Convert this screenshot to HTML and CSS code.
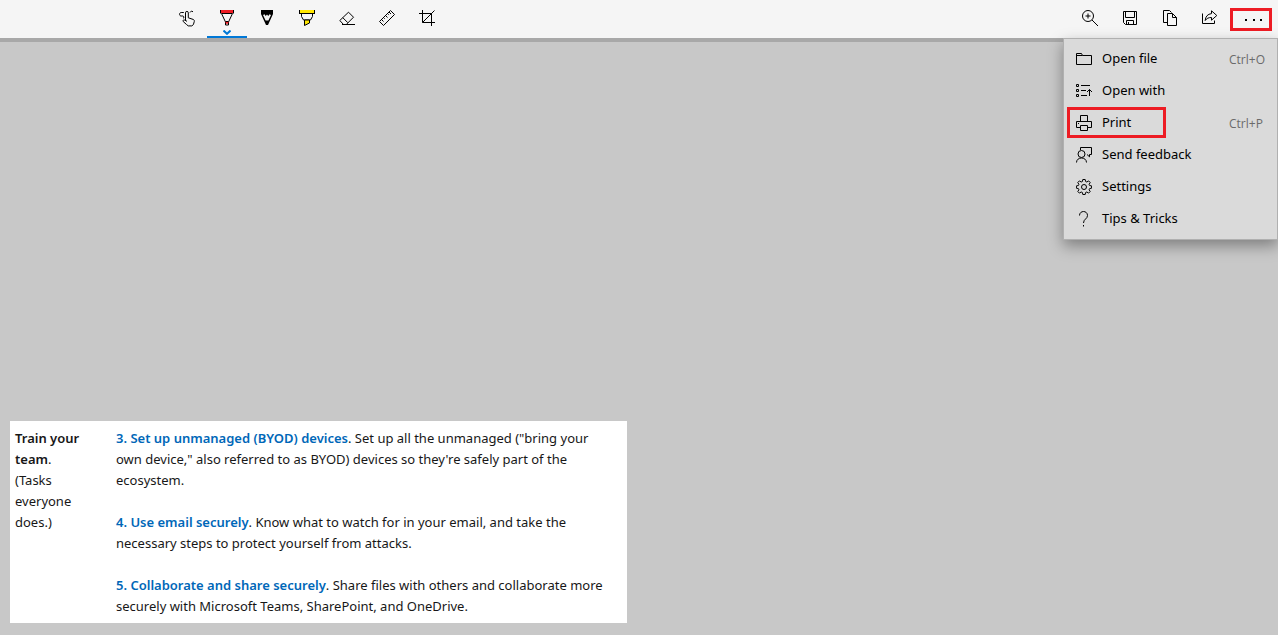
FILE: index.html
```html
<!DOCTYPE html>
<html lang="en">
<head>
<meta charset="utf-8">
<title>Snip &amp; Sketch</title>
<link rel="stylesheet" href="styles.css">
</head>
<body>
<header class="toolbar">
  <div class="tools">
    <button class="tool" aria-label="Touch writing"><svg class="icon" viewBox="0 0 20 20"><path d="M8.500 12.500V4.800a1.400 1.400 0 0 1 2.800 0v5l4.800 1.600c1 .4 1.400 1 1.200 2l-.9 3.200-1.600 1.300h-3.600L9.500 16.500l-3.300-3c-.8-1 .5-2 1.500-1.400l2.300 1.200M6.800 4.500H4.200C2 4.500 2 8 4.200 8h1.600c1.400.2 1.400 2 .2 2.500M13 4.500l1.500-1.500 1.500.8"/></svg></button>
    <button class="tool tool-active" aria-label="Ballpoint pen"><svg class="icon" viewBox="0 0 20 20"><path d="M4.500 5.500l4 8.500v3h3v-3l4-8.500z"/><path class="red" d="M3 2h14v3H3zM8.500 13h3v1.500l-1.500 2-1.500-2z"/><path d="M3.500 5.500v-3.500M16.500 5.500v-3.500M8.500 13.500h3"/></svg><svg class="chevron" viewBox="0 0 8 5"><path d="M0.500 0.500L4 3.800L7.500 0.500"/></svg></button>
    <button class="tool" aria-label="Pencil"><svg class="icon" viewBox="0 0 20 20"><path class="solid" fill-rule="evenodd" d="M4 2h12v4l-5 11H9L4 6zM6 7l2.600 5.500h2.800L14 7l-1.500-.8L11.300 8 10 6.500 8.700 8 7.500 6.200z"/></svg></button>
    <button class="tool" aria-label="Highlighter"><svg class="icon" viewBox="0 0 20 20"><path d="M2.500 5.500h15M4.500 5.500v3l2 3.500h7l2-3.500v-3"/><path class="yellow outlined" d="M7.500 12v5.500l5-2.500v-3z"/><path class="yellow" d="M3 2h14v3H3z"/><path d="M2.500 2v4M17.500 2v4"/></svg></button>
    <button class="tool" aria-label="Eraser"><svg class="icon" viewBox="0 0 20 20"><path d="M2.800 12.500l8.700-8.300 5 5-7.200 7.300H6.500zM5.800 9.700l5 5M5 16.500h13"/></svg></button>
    <button class="tool" aria-label="Ruler"><svg class="icon" viewBox="0 0 20 20"><path d="M2.500 13.500l11-11 4 4-11 11zM4.500 11.500l2 2M6.500 9.500l1.200 1.200M8.500 7.500l2 2M10.500 5.500l1.200 1.200M12 4l2 2"/></svg></button>
    <button class="tool" aria-label="Image crop"><svg class="icon" viewBox="0 0 20 20"><path d="M5.500 2v12.500H18M2 5.500h12.500V18M5.500 14.500L17.500 2.500"/></svg></button>
  </div>
  <div class="actions">
    <button class="tool" aria-label="Zoom"><svg class="icon" viewBox="0 0 20 20"><circle cx="8" cy="8" r="5.500"/><path d="M12 12l6 6M5.500 8h5M8 5.500v5"/></svg></button>
    <button class="tool" aria-label="Save as"><svg class="icon" viewBox="0 0 20 20"><path d="M3.500 3.500h13v13h-11l-2-2zM5.500 3.500v6h9v-6M6.500 16.500v-4h7v4M8.500 14v2.500"/></svg></button>
    <button class="tool" aria-label="Copy"><svg class="icon" viewBox="0 0 20 20"><path d="M7.500 14.500h-4v-12h6l2 2M7.500 5.500h5l4 4v8h-9zM12.500 5.500v4h4"/></svg></button>
    <button class="tool" aria-label="Share"><svg class="icon" viewBox="0 0 20 20"><path d="M2.500 5.500v10h12v-3M11.500 2.800l5.300 4.700-5.300 4.700V9.500c-3 0-4.700.8-6.300 3 .3-4 2.500-6.500 6.300-6.900z"/></svg></button>
    <button class="more" aria-label="See more" aria-expanded="true"><svg class="dots" viewBox="0 0 18 4"><path class="solid" d="M1 1h2v2H1zM9 1h2v2H9zM16 1h2v2h-2z"/></svg></button>
  </div>
  <nav class="menu" aria-label="More options">
    <button class="item"><svg class="item-icon" viewBox="0 0 16 18"><path d="M.5 15.500v-11h5l1 2h9v9zM.5 6.500h6"/></svg><span class="label">Open file</span><kbd class="shortcut">Ctrl+O</kbd></button>
    <button class="item"><svg class="item-icon" viewBox="0 0 16 18"><path d="M.5 3.500h2v2h-2zM.5 8.500h2v2h-2zM.5 13.500h2v2h-2zM5 4.500h9M5 9.500h5M5 14.500h6M13.500 15V8.500M11 11l2.500-2.500L16 11"/></svg><span class="label">Open with</span></button>
    <button class="item item-marked"><svg class="item-icon" viewBox="0 0 16 18"><path d="M4.500 8.500v-6h7v6M4.500 14.500h-4v-6h15v6h-4M4.500 12.500h7v5h-7zM2 10.500h1"/></svg><span class="label">Print</span><kbd class="shortcut">Ctrl+P</kbd></button>
    <button class="item"><svg class="item-icon" viewBox="0 0 16 18"><path d="M4.500 5V2.500h11v7h-2v2.300L11 9.500M.5 17.500c0-6 10-6 10 0"/><circle cx="5.500" cy="9" r="3.500"/></svg><span class="label">Send feedback</span></button>
    <button class="item"><svg class="item-icon" viewBox="0 0 16 18"><path d="M6.800 2.500h2.400l.4 2 1.200.5 1.800-1.100 1.600 1.600L13.100 7.300l.5 1.200 2 .4v2.300l-2 .4-.5 1.200 1.100 1.700-1.600 1.600-1.800-1.100-1.200.5-.4 2H6.800l-.4-2-1.200-.5-1.800 1.100-1.600-1.600 1.100-1.700-.5-1.200-2-.4V8.900l2-.4.5-1.200-1.100-1.800 1.600-1.600L5.200 5l1.200-.5z"/><circle cx="8" cy="10" r="2.500"/></svg><span class="label">Settings</span></button>
    <button class="item"><svg class="item-icon" viewBox="0 0 16 18"><path d="M3.500 6.500c0-5.300 8-5.300 8 0 0 3.500-4 3.500-4 7.500M7.500 16v1.500"/></svg><span class="label">Tips &amp; Tricks</span></button>
  </nav>
</header>
<main class="canvas">
  <table class="snip">
    <tr>
      <th class="topic" scope="row"><b>Train your team</b>. (Tasks everyone does.)</th>
      <td class="tasks">
        <p><a href="#byod">3. Set up unmanaged (BYOD) devices</a>. Set up all the unmanaged ("bring your own device," also referred to as BYOD) devices so they're safely part of the ecosystem.</p>
        <p><a href="#email">4. Use email securely</a>. Know what to watch for in your email, and take the necessary steps to protect yourself from attacks.</p>
        <p><a href="#share">5. Collaborate and share securely</a>. Share files with others and collaborate more securely with Microsoft Teams, SharePoint, and OneDrive.</p>
      </td>
    </tr>
  </table>
</main>
</body>
</html>
```
FILE: styles.css
```css
* { box-sizing: border-box; }

body {
  margin: 0;
  min-height: 100vh;
  display: flex;
  flex-direction: column;
  background: #c8c8c8;
  font-family: "Noto Sans", "Open Sans", sans-serif;
  font-size: 13px;
  color: #000;
}

button {
  margin: 0;
  padding: 0;
  border: 0;
  background: none;
  font: inherit;
  color: inherit;
}

svg {
  display: block;
  fill: none;
  stroke: #000;
  stroke-width: 1;
}

.toolbar {
  position: relative;
  display: flex;
  justify-content: space-between;
  padding: 0 6px 0 167px;
  background: #f5f5f5;
  border-bottom: 4px solid #a8a8a8;
}

.tools { display: flex; }
.actions { display: flex; }

.tool {
  display: flex;
  flex-direction: column;
  align-items: center;
  width: 40px;
  height: 38px;
  padding-top: 8px;
}

.tool-active { border-bottom: 2px solid #0078d7; }

.icon {
  width: 20px;
  height: 20px;
}

.chevron {
  width: 8px;
  height: 5px;
  margin-top: 2px;
  stroke: #0078d7;
  stroke-width: 2;
}

.red { fill: #ed1c24; stroke: none; }
.yellow { fill: #ffe600; stroke: none; }
.outlined { stroke: #000; }
.solid { fill: #000; stroke: none; }

.more {
  display: flex;
  align-items: center;
  justify-content: center;
  width: 42px;
  height: 23px;
  margin-top: 8px;
  padding-left: 4px;
  border: 3px solid #ed1c24;
}

.dots {
  width: 18px;
  height: 4px;
}

.menu {
  position: absolute;
  top: 38px;
  right: 0;
  width: 215px;
  padding: 3px 0 5px;
  border: 1px solid #b0b0b0;
  background: #dadada;
  box-shadow: 0 6px 14px rgba(0, 0, 0, 0.36);
}

.item {
  position: relative;
  display: flex;
  align-items: center;
  gap: 10px;
  width: 100%;
  height: 32px;
  padding: 0 12px;
  text-align: left;
}

.item-marked::after {
  content: "";
  position: absolute;
  inset: 1px 111px 0 3px;
  border: 3px solid #ed1c24;
}

.item-icon {
  flex: none;
  width: 16px;
  height: 18px;
}

.label { flex: 1; }

.shortcut {
  width: 36px;
  padding-top: 2px;
  font-family: "Open Sans", sans-serif;
  font-size: 12px;
  color: #6a6a6a;
}

.canvas {
  flex: 1;
  display: flex;
  align-items: flex-end;
  padding: 10px 10px 12px;
}

.snip {
  width: 100%;
  max-width: 617px;
  border-collapse: collapse;
  background: #fff;
  color: #171717;
  line-height: 21px;
}

.topic,
.tasks {
  padding: 7px 5px 6px;
  vertical-align: top;
  text-align: left;
  font-weight: 400;
}

.topic {
  width: 101px;
  padding-right: 20px;
}

.topic b { font-weight: 600; }

.tasks { padding-right: 15px; }

.tasks p { margin: 0 0 21px; }
.tasks p:last-child { margin-bottom: 0; }

.tasks a {
  color: #0067b8;
  font-weight: 600;
  text-decoration: none;
}
```
